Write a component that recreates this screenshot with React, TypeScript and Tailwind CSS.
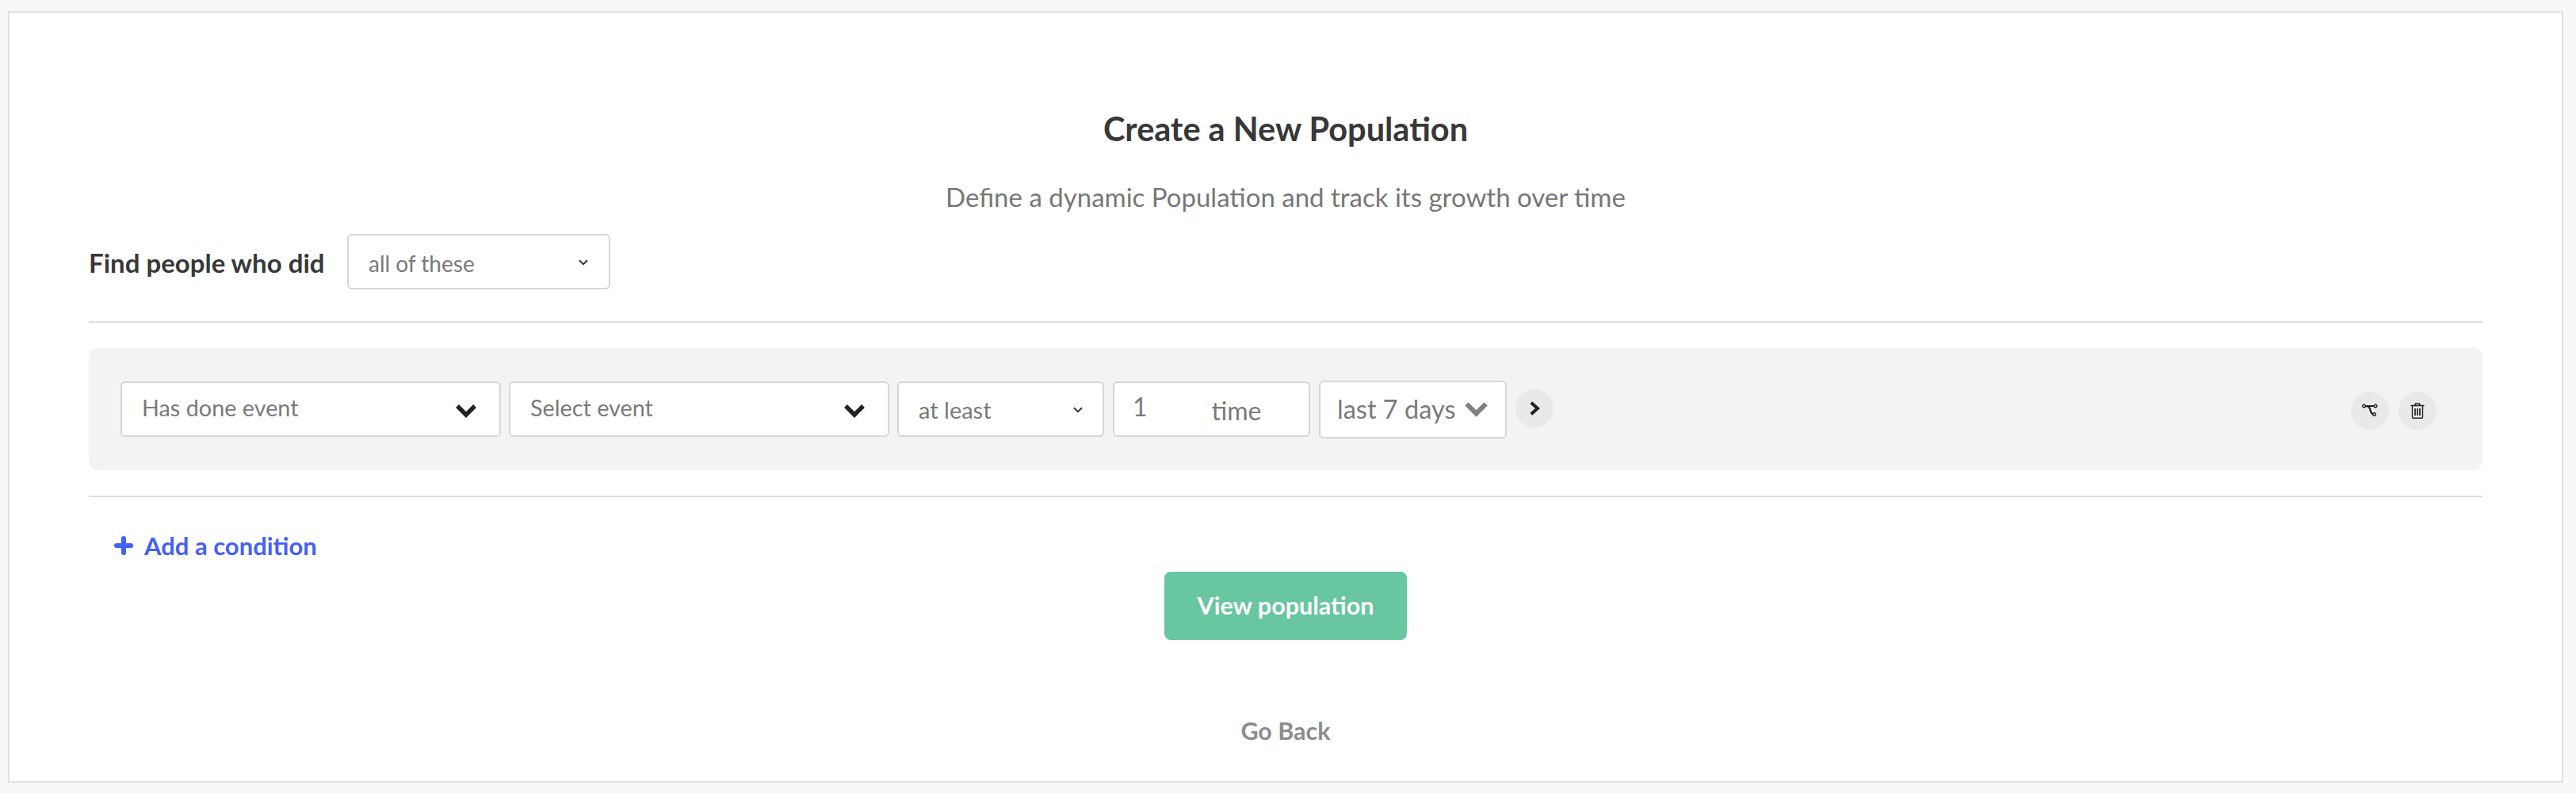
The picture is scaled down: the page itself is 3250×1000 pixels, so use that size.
import React from "react";

function Chevron({ className }: { className: string }) {
  return (
    <svg viewBox="0 0 28 20" className={className} fill="none" stroke="currentColor" strokeWidth="5.5" strokeLinejoin="miter">
      <path d="M3 4 L14 15 L25 4" />
    </svg>
  );
}

function SmallChevron({ className }: { className: string }) {
  return (
    <svg viewBox="0 0 12 8" className={`ml-auto h-[8px] w-[12px] text-[#333] ${className}`} fill="none" stroke="currentColor" strokeWidth="2">
      <path d="M1 1.2 L6 6.2 L11 1.2" />
    </svg>
  );
}

function Box({ className, children }: { className: string; children: React.ReactNode }) {
  return (
    <div className={`flex items-center rounded-[6px] border-2 border-[#d6d6d6] bg-white text-[#7a7a7a] ${className}`}>
      {children}
    </div>
  );
}

function Round({ className, children }: { className: string; children: React.ReactNode }) {
  return (
    <div className={`flex h-[48px] w-[48px] shrink-0 items-center justify-center rounded-full bg-[#e9e9e9] ${className}`}>
      {children}
    </div>
  );
}

export default function App() {
  return (
    <div className="h-[1000px] bg-[#f7f8fa] pt-[14px] pl-[10px] font-['Lato',sans-serif]">
      <div className="h-[973px] w-[3224px] border-2 border-[#e0e0e0] bg-white px-[100px] pt-[121px]">
        <h1 className="h-[50px] text-center text-[41.5px] leading-[50px] font-bold text-[#383838]">Create a New Population</h1>
        <p className="mt-[39px] h-[44px] text-center text-[33px] leading-[44px] text-[#777]">
          Define a dynamic Population and track its growth over time
        </p>

        <div className="mt-[25px] flex h-[70px] items-center">
          <span className="w-[326px] pt-[4px] text-[33px] font-bold text-[#383838]">Find people who did</span>
          <Box className="h-[70px] w-[332px] pr-[26px] pl-[25px] text-[28px]">
            <span className="pt-[4px]">all of these</span>
            <SmallChevron className="mt-[1px]" />
          </Box>
        </div>

        <div className="mt-[40px] h-[2px] bg-[#dcdcdc]" />

        <div className="mt-[32px] flex h-[154px] items-center rounded-[12px] bg-[#f3f3f3] pr-[58px] pl-[40px]">
          <Box className="h-[70px] w-[480px] pr-[28px] pl-[25px] text-[28.8px]">
            <span className="-mt-[3px]">Has done event</span>
            <Chevron className="mt-[4px] ml-auto h-[20px] w-[28px] text-[#222]" />
          </Box>
          <Box className="ml-[10px] h-[70px] w-[480px] pr-[28px] pl-[25px] text-[28.8px]">
            <span className="-mt-[3px]">Select event</span>
            <Chevron className="mt-[4px] ml-auto h-[20px] w-[28px] text-[#222]" />
          </Box>
          <Box className="ml-[10px] h-[70px] w-[261px] pr-[25px] pl-[25px] text-[29px]">
            <span className="pt-[2px]">at least</span>
            <SmallChevron className="mt-[1px]" />
          </Box>
          <Box className="ml-[11px] h-[70px] w-[249px] pl-[23px] text-[32px]">
            <span className="-mt-[6px]">1</span>
            <span className="ml-[81px] pt-[3px]">time</span>
          </Box>
          <Box className="ml-[11px] h-[73px] w-[237px] pl-[21px] text-[32.5px]">
            <span className="whitespace-nowrap">last 7 days</span>
            <Chevron className="ml-[10px] h-[22px] w-[31px] text-[#808080]" />
          </Box>
          <Round className="ml-[11px] -mt-[2px]">
            <svg viewBox="0 0 16 22" className="h-[20px] w-[14.5px] text-[#222]" fill="none" stroke="currentColor" strokeWidth="4.5">
              <path d="M3 3 L12 11 L3 19" />
            </svg>
          </Round>

          <Round className="ml-auto mt-[4px]">
            <svg viewBox="0 0 20 18" className="h-[18px] w-[20px] text-[#222]" fill="none" stroke="currentColor">
              <path d="M3.5 3 L16 3 M3.5 3 C8 3 9.5 4 10.5 8 C11 11 12 13 15 13.5" strokeWidth="2.2" />
              <circle cx="2.5" cy="3" r="1.8" fill="#e9e9e9" strokeWidth="1.4" />
              <circle cx="17" cy="3" r="1.8" fill="#e9e9e9" strokeWidth="1.4" />
              <circle cx="15.5" cy="13.5" r="1.8" fill="#e9e9e9" strokeWidth="1.4" />
            </svg>
          </Round>
          <Round className="ml-[12px] mt-[4px]">
            <svg viewBox="0 0 18 20" className="h-[20px] w-[18px] text-[#222]" fill="none" stroke="currentColor" strokeWidth="1.4">
              <path d="M0.5 3.5 L17.5 3.5 M5.5 3.5 L6.5 1 L11.5 1 L12.5 3.5" />
              <path d="M2.5 3.5 L2.5 18 Q2.5 19.3 3.8 19.3 L14.2 19.3 Q15.5 19.3 15.5 18 L15.5 3.5" />
              <path d="M6 7 L6 16 M9 7 L9 16 M12 7 L12 16" strokeWidth="1.7" />
            </svg>
          </Round>
        </div>

        <div className="mt-[32px] h-[2px] bg-[#dcdcdc]" />

        <div className="mt-[41px] flex h-[40px] items-center pl-[32px] text-[31px] font-bold text-[#4361f5]">
          <svg viewBox="0 0 24 24" className="h-[24px] w-[24px]" fill="none" stroke="currentColor" strokeWidth="6" strokeLinecap="round">
            <path d="M12 3 L12 21 M3 12 L21 12" />
          </svg>
          <span className="ml-[14px]">Add a condition</span>
        </div>

        <div className="mt-[13px] flex justify-center">
          <button className="h-[86px] w-[306px] rounded-[8px] bg-[#68c6a0] text-[30.5px] font-bold text-white">View population</button>
        </div>

        <div className="mt-[94px] h-[40px] text-center text-[30.5px] leading-[40px] font-bold text-[#8c8c8c]">Go Back</div>
      </div>
    </div>
  );
}
